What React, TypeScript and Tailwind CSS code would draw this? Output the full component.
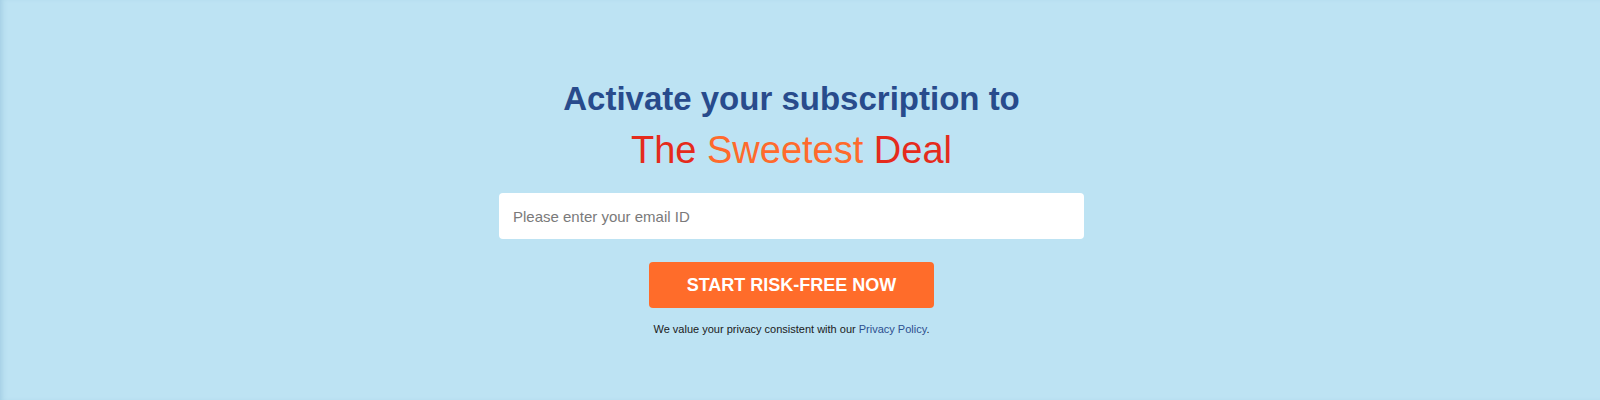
export default function App() {
  return (
    <div className="w-full h-[400px] bg-[#bde3f3] shadow-[inset_5px_0_6px_-4px_rgba(80,140,180,0.3)] font-['Liberation_Sans',Arial,sans-serif]">
      <div className="w-[1583px] flex flex-col items-center pt-[79px]">
        <h1 className="text-[33px] leading-[40px] font-bold text-[#284b8c]">
          Activate your subscription to
        </h1>
        <h2 className="mt-[8px] text-[38px] leading-[46px] text-[#e52b1c]">
          The <span className="text-[#ff6a2c]">Sweetest</span> Deal
        </h2>
        <input
          type="email"
          placeholder="Please enter your email ID"
          className="mt-[20px] w-[585px] h-[46px] px-[14px] bg-white rounded-[4px] text-[15px] text-gray-700 placeholder:text-[#7a7a7a] outline-none"
        />
        <button className="mt-[23px] w-[285px] h-[46px] rounded-[4px] bg-[#ff6c2a] text-white font-bold text-[18px] uppercase">
          Start Risk-Free Now
        </button>
        <p className="mt-[14px] text-[11px] leading-[14px] text-[#1a1a1a]">
          We value your privacy consistent with our{" "}
          <a href="#" className="text-[#2c4f8f]">Privacy Policy</a>.
        </p>
      </div>
    </div>
  );
}
